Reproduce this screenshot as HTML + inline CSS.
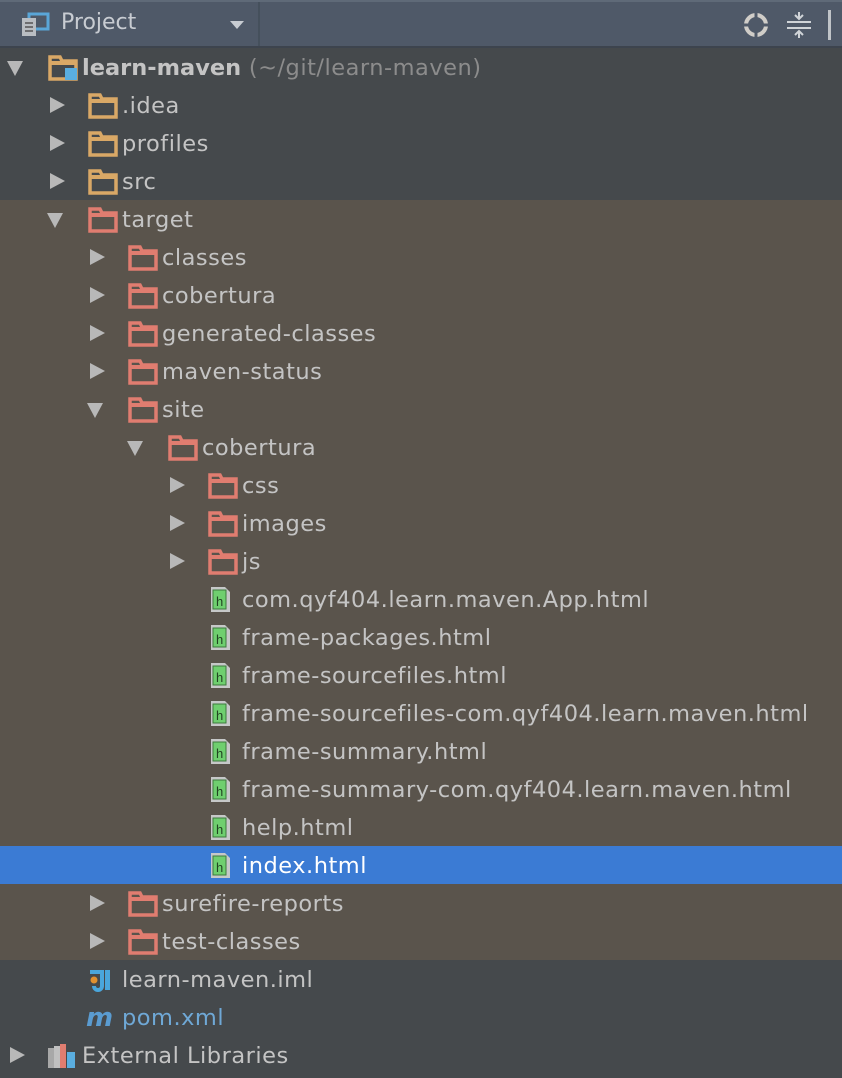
<!DOCTYPE html>
<html><head><style>
body{margin:0;width:842px;height:1078px;background:#45494c;font-family:"DejaVu Sans","Liberation Sans",sans-serif;overflow:hidden;position:relative}
.hdr{position:absolute;left:0;top:0;width:842px;height:44px;background:#4f5968;border-top:2px solid #5f6a78;border-bottom:2px solid #3d444e}
.hdr .sep{position:absolute;left:258px;top:0;width:2px;height:44px;background:#45505c}
.row{position:absolute;left:0;width:842px;height:38px;color:#c4c4c4;font-size:22.5px;letter-spacing:0.5px;line-height:40px;white-space:nowrap}
.row span.t{position:absolute;top:0}
.arr{position:absolute;top:11px;width:0;height:0}
.ar{border-left:15px solid #b8b8b8;border-top:8px solid transparent;border-bottom:8px solid transparent;top:11px}
.ad{border-top:15px solid #b8b8b8;border-left:8px solid transparent;border-right:8px solid transparent;top:13px}
.fold{position:absolute;top:7px;width:30px;height:26px}
.file{position:absolute;top:6px}
</style></head><body>
<div class="hdr"><div class="sep"></div>
<svg style="position:absolute;left:20px;top:8px" width="32" height="28"><rect x="9" y="4" width="19" height="15" fill="none" stroke="#5aa6d8" stroke-width="3"/><rect x="2" y="8" width="14" height="18" fill="#b9bdc2"/><path d="M5 13h8M5 17h8M5 21h8" stroke="#555" stroke-width="1.5"/></svg>
<span style="position:absolute;left:61px;top:8px;font-size:22px;color:#c8ccd2">Project</span>
<div style="position:absolute;left:230px;top:19px;border-top:8px solid #c8ccd2;border-left:7px solid transparent;border-right:7px solid transparent"></div>
<svg style="position:absolute;left:743px;top:10px" width="26" height="26"><circle cx="13" cy="13" r="10" fill="none" stroke="#d0cdc8" stroke-width="4"/><path d="M13 1v24M1 13h24" stroke="#4f5968" stroke-width="3"/></svg>
<svg style="position:absolute;left:785px;top:8px" width="28" height="30"><path d="M2 12h24M2 18h24" stroke="#d0d4d8" stroke-width="2"/><path d="M14 2v7M10 5l4 4 4-4M14 28v-7M10 25l4-4 4 4" stroke="#d0d4d8" stroke-width="2" fill="none"/></svg>
<div style="position:absolute;left:828px;top:8px;width:3px;height:30px;background:#c0c4c8"></div>
</div>
<div style="position:absolute;left:0;top:200px;width:842px;height:760px;background:#5a544c"></div>
<div style="position:absolute;left:0;top:846px;width:842px;height:38px;background:#3b7bd4"></div>
<div id="tree"></div>
<script>
var rows=[
[0,'d','root','<b style="font-weight:bold;letter-spacing:0">learn-maven</b> <span style="color:#8c8c8c">(~/git/learn-maven)</span>'],
[1,'r','y','.idea'],[1,'r','y','profiles'],[1,'r','y','src'],[1,'d','p','target'],
[2,'r','p','classes'],[2,'r','p','cobertura'],[2,'r','p','generated-classes'],[2,'r','p','maven-status'],[2,'d','p','site'],
[3,'d','p','cobertura'],[4,'r','p','css'],[4,'r','p','images'],[4,'r','p','js'],
[4,'','h','com.qyf404.learn.maven.App.html'],[4,'','h','frame-packages.html'],[4,'','h','frame-sourcefiles.html'],
[4,'','h','frame-sourcefiles-com.qyf404.learn.maven.html'],[4,'','h','frame-summary.html'],
[4,'','h','frame-summary-com.qyf404.learn.maven.html'],[4,'','h','help.html'],[4,'','h','index.html'],
[2,'r','p','surefire-reports'],[2,'r','p','test-classes'],
[1,'','iml','learn-maven.iml'],[1,'','m','<span style="color:#6fa8d6">pom.xml</span>'],[0,'r','lib','External Libraries']];
var h='';
rows.forEach(function(r,i){
 var top=48+38*i,x=40*r[0];
 var s='<div class="row" style="top:'+top+'px'+(i==21?';color:#fff':'')+'">';
 if(r[1]=='r')s+='<div class="arr ar" style="left:'+(x+10)+'px"></div>';
 if(r[1]=='d')s+='<div class="arr ad" style="left:'+(x+7)+'px"></div>';
 var ix=x+48,tx=x+82;
 if(r[2]=='y'||r[2]=='p'||r[2]=='root'){var c=r[2]=='p'?'#e07d70':'#d9a866';
  s+='<svg class="fold" style="left:'+ix+'px" width="30" height="26"><path d="M2 24V2h10l2 4h14v18z" fill="none" stroke="'+c+'" stroke-width="3.5"/><rect x="1" y="6" width="28" height="4" fill="'+c+'"/>'+(r[2]=='root'?'<rect x="17" y="13" width="12" height="12" fill="#5aaee0"/>':'')+'</svg>';}
 if(r[2]=='h')s+='<svg class="file" style="left:'+(ix+2)+'px" width="22" height="27"><path d="M1 1h14l5 5v20H1z" fill="#c6c8c8"/><rect x="3" y="4" width="13" height="19" fill="#6fcf6f" stroke="#3e7a3e"/><text x="6" y="20" font-size="13" font-family="Liberation Sans" fill="#224422">h</text></svg>';
 if(r[2]=='iml')s+='<svg class="file" style="left:'+(ix)+'px" width="28" height="27"><circle cx="6" cy="14" r="3.5" fill="#e09030"/><path d="M2 6h12v14a4 4 0 0 1-8 0" fill="none" stroke="#4aa6dc" stroke-width="4"/><rect x="17" y="4" width="5" height="20" fill="#4aa6dc"/></svg>';
 if(r[2]=='m')s+='<span class="t" style="left:'+(ix-2)+'px;color:#5a9bd0;font-style:italic;font-weight:bold;font-size:26px">m</span>';
 if(r[2]=='lib')s+='<svg class="file" style="left:'+(ix)+'px" width="28" height="27"><rect x="0" y="6" width="6" height="20" fill="#a8a8a8"/><rect x="6" y="4" width="6" height="22" fill="#c0c0c0"/><rect x="12" y="2" width="6" height="24" fill="#e07d70"/><rect x="19" y="10" width="8" height="16" fill="#5aaee0"/></svg>';
 s+='<span class="t" style="left:'+tx+'px">'+r[3]+'</span></div>';
 h+=s;});
document.getElementById('tree').innerHTML=h;
</script>
</body></html>
